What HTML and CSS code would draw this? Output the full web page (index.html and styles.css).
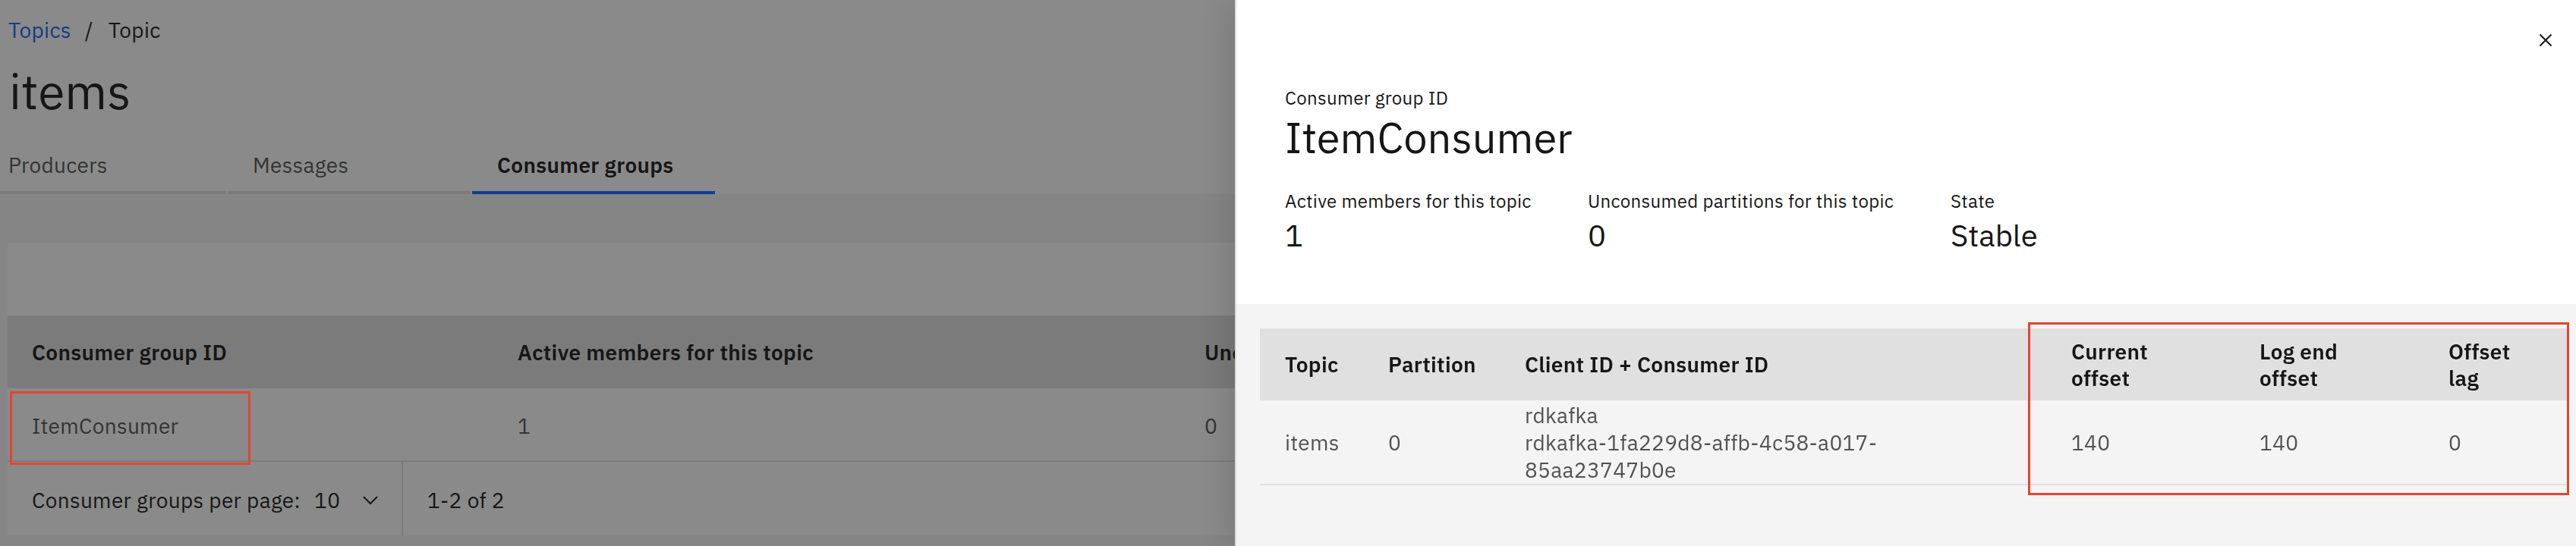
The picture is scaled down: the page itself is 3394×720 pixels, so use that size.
FILE: index.html
```html
<!DOCTYPE html>
<html lang="en">
<head>
<meta charset="utf-8">
<title>items - Consumer groups</title>
<link rel="stylesheet" href="styles.css">
</head>
<body>
<div class="page">
  <header class="page-header">
    <nav class="breadcrumb">
      <a class="crumb-link" href="#">Topics</a>
      <span class="crumb-sep">/</span>
      <span class="crumb-current">Topic</span>
    </nav>
    <h1 class="page-title">items</h1>
    <div class="tabs">
      <div class="tab">Producers</div>
      <div class="tab">Messages</div>
      <div class="tab tab-active">Consumer groups</div>
    </div>
  </header>
  <main class="content">
    <div class="table-card">
      <div class="table-toolbar"></div>
      <table class="cg-table">
        <colgroup><col class="c1"><col class="c2"><col class="c3"></colgroup>
        <thead>
          <tr><th>Consumer group ID</th><th>Active members for this topic</th><th>Unconsumed partitions for this topic</th></tr>
        </thead>
        <tbody>
          <tr>
            <td class="cell-annotated">ItemConsumer<span class="annot annot-left"></span></td>
            <td>1</td>
            <td>0</td>
          </tr>
        </tbody>
      </table>
      <div class="pagination">
        <div class="per-page">
          <span class="per-page-label">Consumer groups per page:</span>
          <span class="per-page-value">10</span>
          <svg class="chevron" width="20" height="12" viewBox="0 0 20 12"><path d="M1 1 L10 10 L19 1" fill="none" stroke="#161616" stroke-width="2"/></svg>
        </div>
        <div class="range">1-2 of 2</div>
      </div>
    </div>
  </main>
</div>

<div class="overlay"></div>

<aside class="drawer">
  <button class="close-btn" aria-label="Close">
    <svg width="32" height="32" viewBox="0 0 32 32"><path d="M8.5 8.5 L23.5 23.5 M23.5 8.5 L8.5 23.5" stroke="#161616" stroke-width="2" fill="none"/></svg>
  </button>
  <section class="drawer-head">
    <div class="label">Consumer group ID</div>
    <div class="drawer-title">ItemConsumer</div>
    <div class="stats">
      <div class="stat">
        <div class="label">Active members for this topic</div>
        <div class="stat-value">1</div>
      </div>
      <div class="stat">
        <div class="label">Unconsumed partitions for this topic</div>
        <div class="stat-value">0</div>
      </div>
      <div class="stat">
        <div class="label">State</div>
        <div class="stat-value">Stable</div>
      </div>
    </div>
  </section>
  <section class="drawer-body">
    <div class="detail-wrap">
      <table class="detail-table">
        <colgroup>
          <col class="d-topic"><col class="d-part"><col class="d-client"><col class="d-cur"><col class="d-end"><col class="d-lag">
        </colgroup>
        <thead>
          <tr><th>Topic</th><th>Partition</th><th>Client ID + Consumer ID</th><th>Current offset</th><th>Log end offset</th><th>Offset lag</th></tr>
        </thead>
        <tbody>
          <tr>
            <td>items</td>
            <td>0</td>
            <td><div>rdkafka</div><div>rdkafka-1fa229d8-affb-4c58-a017-85aa23747b0e</div></td>
            <td>140</td>
            <td>140</td>
            <td>0</td>
          </tr>
        </tbody>
      </table>
      <span class="annot annot-right"></span>
    </div>
  </section>
</aside>
</body>
</html>
```

FILE: styles.css
```css
* { box-sizing: border-box; }

html, body { margin: 0; padding: 0; }

body {
  width: 3394px;
  height: 720px;
  overflow: hidden;
  position: relative;
  background: #ffffff;
  color: #161616;
  font-family: "IBM Plex Sans", Roboto, "Liberation Sans", sans-serif;
  letter-spacing: 0.32px;
}

/* ---------- page under the overlay ---------- */
.page {
  height: 720px;
  display: flex;
  flex-direction: column;
}

.page-header {
  background: #ffffff;
  padding: 22px 0 0 11px;
}

.breadcrumb {
  display: flex;
  align-items: center;
  font-size: 28px;
  line-height: 36px;
}

.crumb-link { color: #0f62fe; text-decoration: none; }
.crumb-sep { margin: 0 20px 0 18px; }

.page-title {
  margin: 22px 0 0 1px;
  font-size: 64px;
  line-height: 80px;
  font-weight: 400;
  letter-spacing: 0;
}

.tabs {
  display: flex;
  gap: 2px;
  margin: 16px 0 0 -33px;
}

.tab {
  width: 320px;
  padding: 24px 33px 16px;
  font-size: 28px;
  line-height: 36px;
  color: #525252;
  border-bottom: 4px solid #e0e0e0;
  white-space: nowrap;
}

.tab-active {
  color: #161616;
  font-weight: 600;
  border-bottom-color: #0f62fe;
}

.content {
  flex: 1;
  background: #f4f4f4;
  padding: 64px 0 0 10px;
}

/* the card runs on under the side panel; only its visible part is kept */
.table-card {
  width: 1617px;
  overflow: hidden;
  background: #ffffff;
}

.table-toolbar { height: 96px; }

.cg-table {
  width: 2400px;
  border-collapse: collapse;
  table-layout: fixed;
}

.cg-table .c1 { width: 640px; }
.cg-table .c2 { width: 905px; }
.cg-table .c3 { width: 855px; }

.cg-table th {
  height: 96px;
  background: #e0e0e0;
  text-align: left;
  padding: 0 32px;
  font-size: 28px;
  font-weight: 600;
  color: #161616;
  white-space: nowrap;
}

.cg-table td {
  height: 96px;
  padding: 3px 32px 0;
  font-size: 28px;
  color: #525252;
  border-bottom: 2px solid #e0e0e0;
}

.cell-annotated { position: relative; }

.pagination {
  display: flex;
  align-items: stretch;
  height: 97px;
  padding-top: 4px;
  font-size: 28px;
  color: #161616;
}

.per-page {
  width: 521px;
  display: flex;
  align-items: center;
  padding-left: 32px;
  border-right: 2px solid #e0e0e0;
  margin-top: -4px;
  padding-top: 4px;
}

.per-page-value { margin-left: 18px; }
.chevron { margin-left: 30px; }

.range {
  display: flex;
  align-items: center;
  padding-left: 32px;
}

/* ---------- annotations ---------- */
.annot {
  position: absolute;
  border: 3px solid #e5452e;
  z-index: 20;
}

.annot-left {
  left: 3px;
  top: 4px;
  width: 317px;
  height: 97px;
}

.annot-right {
  left: 1012px;
  top: -8px;
  width: 713px;
  height: 228px;
}

/* ---------- overlay & drawer ---------- */
.overlay {
  position: fixed;
  inset: 0;
  background: rgba(22, 22, 22, 0.5);
  z-index: 10;
}

.drawer {
  position: fixed;
  top: 0;
  right: 0;
  bottom: 0;
  width: 1767px;
  z-index: 30;
  display: flex;
  flex-direction: column;
  background: #f4f4f4;
  border-left: 2px solid #dcdcdc;
  box-shadow: -6px 0 40px rgba(0, 0, 0, 0.14);
}

.close-btn {
  position: absolute;
  top: 37px;
  right: 24px;
  width: 32px;
  height: 32px;
  padding: 0;
  border: 0;
  background: transparent;
  display: flex;
}

.drawer-head {
  height: 401px;
  background: #ffffff;
  padding: 113px 0 0 64px;
}

.label {
  font-size: 24px;
  line-height: 32px;
  color: #161616;
}

.drawer-title {
  margin-top: 4px;
  font-size: 56px;
  line-height: 64px;
  font-weight: 400;
  letter-spacing: 0;
}

.stats {
  display: grid;
  grid-template-columns: 399px 478px auto;
  margin-top: 36px;
}

.stat-value {
  margin-top: 5px;
  font-size: 40px;
  line-height: 48px;
  letter-spacing: 0;
}

.drawer-body {
  flex: 1;
  padding: 32px 0 0 31px;
}

.detail-wrap {
  position: relative;
  width: 1723px;
}

.detail-table {
  width: 1723px;
  border-collapse: collapse;
  table-layout: fixed;
}

.d-topic { width: 136px; }
.d-part { width: 180px; }
.d-client { width: 720px; }
.d-cur { width: 248px; }
.d-end { width: 249px; }
.d-lag { width: 190px; }

.detail-table th {
  height: 95px;
  background: #e0e0e0;
  text-align: left;
  padding: 0 33px;
  font-size: 28px;
  line-height: 35px;
  font-weight: 600;
  color: #161616;
}

.detail-table td {
  padding: 2px 33px 0;
  font-size: 28px;
  line-height: 36px;
  color: #525252;
  border-bottom: 2px solid #e0e0e0;
  vertical-align: middle;
}
```
